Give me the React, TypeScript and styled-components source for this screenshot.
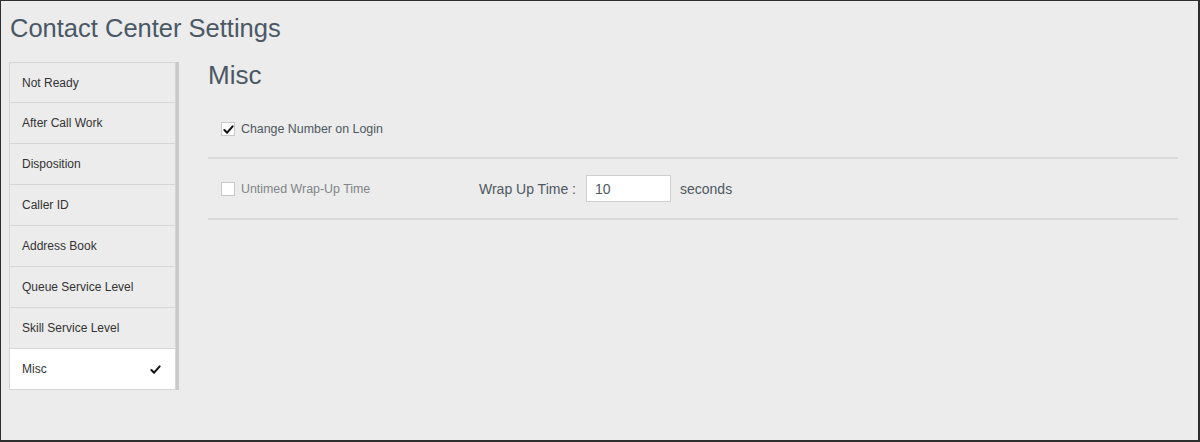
import React, { useState } from 'react';
import styled, { createGlobalStyle } from 'styled-components';

const GlobalStyle = createGlobalStyle`
  html, body {
    margin: 0;
    padding: 0;
    background: #ececec;
    font-family: "Liberation Sans", Arial, sans-serif;
  }
  * { box-sizing: border-box; }
`;

const Frame = styled.div`
  width: 1200px;
  height: 442px;
  background: #ececec;
  border: 1px solid #2e2e2e;
  border-right-width: 2px;
  border-bottom-width: 2px;
  padding: 0 20px 0 8px;
  display: flex;
  flex-direction: column;
`;

const PageTitle = styled.h1`
  margin: 0;
  padding: 12px 0 0 1px;
  height: 61px;
  font-size: 25.5px;
  font-weight: normal;
  line-height: 30px;
  color: #4a5865;
`;

const Body = styled.div`
  display: flex;
  align-items: flex-start;
`;

const Sidebar = styled.ul`
  list-style: none;
  margin: 0;
  padding: 0;
  width: 170px;
  border-right: 3px solid #c9c9c9;
`;

const NavItem = styled.li<{ $active?: boolean }>`
  height: 41px;
  display: flex;
  align-items: center;
  justify-content: space-between;
  padding: 0 14px 0 12px;
  font-size: 12px;
  color: #333;
  background: ${p => (p.$active ? '#ffffff' : '#ececec')};
  border: 1px solid #d6d6d6;
  border-top: none;
  cursor: pointer;
  &:first-child {
    border-top: 1px solid #d6d6d6;
  }
`;

const Content = styled.section`
  flex: 1;
  margin-left: 29px;
`;

const Heading = styled.h2`
  margin: 0;
  height: 26px;
  font-size: 26px;
  font-weight: normal;
  line-height: 26px;
  color: #4a5865;
`;

const Row = styled.div<{ $pt: number; $pb: number }>`
  display: flex;
  align-items: center;
  padding: ${p => p.$pt}px 0 ${p => p.$pb}px 13px;
  border-bottom: 2px solid #d9d9d9;
`;

const CheckGroup = styled.label<{ $width?: number; $muted?: boolean }>`
  display: flex;
  align-items: center;
  gap: 6px;
  width: ${p => (p.$width ? `${p.$width}px` : 'auto')};
  font-size: 12.4px;
  color: ${p => (p.$muted ? '#80858a' : '#4d5862')};
  cursor: pointer;
`;

const Box = styled.span`
  width: 14px;
  height: 14px;
  background: #fff;
  border: 1px solid #c8c8c8;
  display: flex;
  align-items: center;
  justify-content: center;
`;

const FieldLabel = styled.span`
  font-size: 14px;
  color: #4d5862;
  margin-right: 10px;
`;

const Input = styled.input`
  width: 85px;
  height: 27px;
  border: 1px solid #cfcfcf;
  background: #fff;
  padding: 0 8px;
  font-family: "Liberation Sans", Arial, sans-serif;
  font-size: 14px;
  color: #4d5862;
  outline: none;
`;

const Unit = styled.span`
  font-size: 14px;
  color: #4d5862;
  margin-left: 9px;
`;

const Tick = ({ size = 12 }: { size?: number }) => (
  <svg width={size} height={size} viewBox="0 0 12 12">
    <path d="M1.5 6.5 L4.5 9.5 L10.5 2.5" fill="none" stroke="#111" strokeWidth="2.2" strokeLinecap="round" strokeLinejoin="round" />
  </svg>
);

const items = [
  'Not Ready',
  'After Call Work',
  'Disposition',
  'Caller ID',
  'Address Book',
  'Queue Service Level',
  'Skill Service Level',
  'Misc',
];

export default function App() {
  const [active, setActive] = useState('Misc');
  const [changeNumber, setChangeNumber] = useState(true);
  const [untimed, setUntimed] = useState(false);
  const [wrap, setWrap] = useState('10');

  return (
    <>
      <GlobalStyle />
      <Frame>
        <PageTitle>Contact Center Settings</PageTitle>
        <Body>
          <Sidebar>
            {items.map(i => (
              <NavItem key={i} $active={i === active} onClick={() => setActive(i)}>
                <span>{i}</span>
                {i === active && <Tick size={11} />}
              </NavItem>
            ))}
          </Sidebar>
          <Content>
            <Heading>{active}</Heading>
            <Row $pt={34} $pb={21}>
              <CheckGroup onClick={() => setChangeNumber(!changeNumber)}>
                <Box>{changeNumber && <Tick size={11} />}</Box>
                Change Number on Login
              </CheckGroup>
            </Row>
            <Row $pt={16} $pb={16}>
              <CheckGroup $width={258} $muted onClick={() => setUntimed(!untimed)}>
                <Box>{untimed && <Tick size={11} />}</Box>
                Untimed Wrap-Up Time
              </CheckGroup>
              <FieldLabel>Wrap Up Time :</FieldLabel>
              <Input value={wrap} onChange={e => setWrap(e.target.value)} />
              <Unit>seconds</Unit>
            </Row>
          </Content>
        </Body>
      </Frame>
    </>
  );
}
